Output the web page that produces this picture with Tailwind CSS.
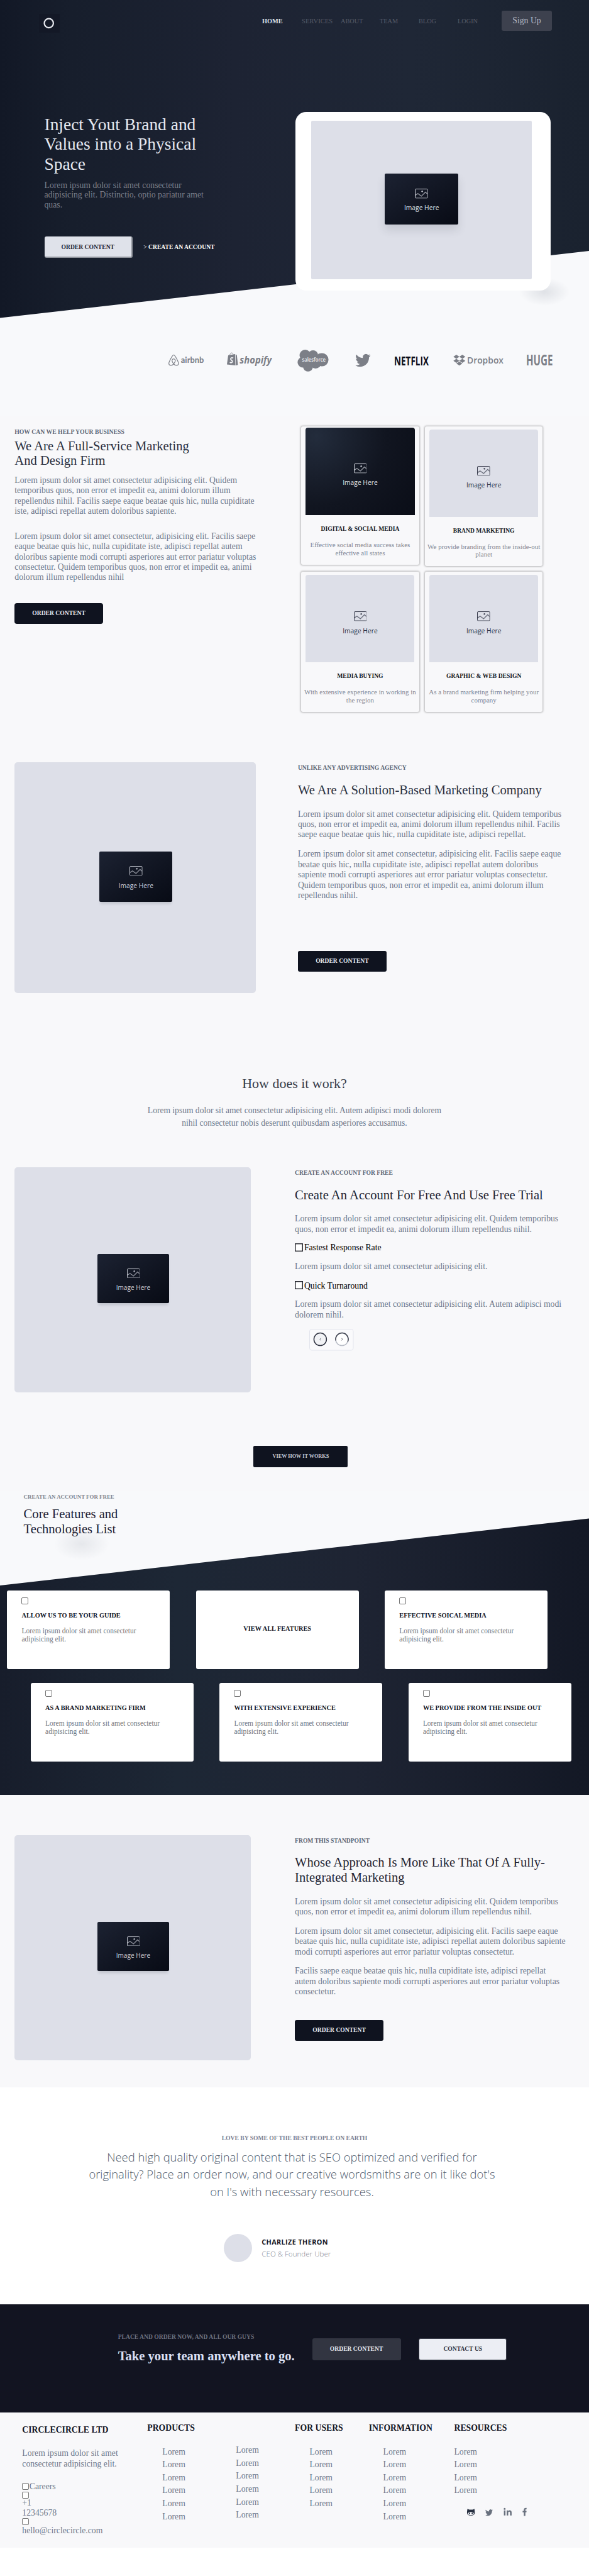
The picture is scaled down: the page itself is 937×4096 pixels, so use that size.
<!DOCTYPE html>
<html lang="en">
<head>
<meta charset="utf-8">
<title>CircleCircle</title>
<script src="https://cdn.jsdelivr.net/npm/@tailwindcss/browser@4"></script>
</head>
<body class="w-[937px] h-[4096px] overflow-hidden bg-white text-[13.73px] leading-[16.45px] text-[#6e788c] font-['Liberation_Serif',serif]">

<svg class="hidden">
  <symbol id="pic" viewBox="0 0 24 18"><rect x=".6" y=".6" width="22.8" height="16.8" rx="1.5" fill="none" stroke="currentColor" stroke-width="1.1"/><path d="M1 12 5.5 9 12 13.7 19.5 6.3 23 9.6" fill="none" stroke="currentColor" stroke-opacity=".65" stroke-width="1.5"/><circle cx="13.5" cy="5" r="1.5" fill="currentColor" fill-opacity=".8"/></symbol>
  <symbol id="bird" viewBox="0 0 24 24" preserveAspectRatio="none"><path fill="currentColor" transform="translate(0 -2.4) scale(1 1.2)" d="M24 4.6a10 10 0 0 1-2.8.8 5 5 0 0 0 2.1-2.7 10 10 0 0 1-3.1 1.2 4.9 4.9 0 0 0-8.4 4.5A14 14 0 0 1 1.6 3.2 4.9 4.9 0 0 0 3.200 9.700a5 5 0 0 1-2.200-.6v.1a4.900 4.900 0 0 0 3.900 4.800 5 5 0 0 1-2.200.1 4.900 4.900 0 0 0 4.600 3.400A9.900 9.900 0 0 1 0 19.540a14 14 0 0 0 7.500 2.200c9.100 0 14-7.500 14-14v-.6A10 10 0 0 0 24 4.600z"/></symbol>
</svg>

<!-- Hero -->
<section class="relative h-[661px] bg-[#f8f9fb] overflow-hidden">
  <svg class="absolute inset-0" width="937" height="661" viewBox="0 0 937 661">
    <defs>
      <linearGradient id="hg" x1="0" x2="1" y1="0" y2="0"><stop offset="0" stop-color="#121826"/><stop offset=".12" stop-color="#171e2c"/><stop offset=".4" stop-color="#1d2333"/><stop offset=".7" stop-color="#1f2736"/><stop offset="1" stop-color="#1a222f"/></linearGradient>
      <radialGradient id="hs"><stop offset="0" stop-color="#9aa0ac" stop-opacity=".26"/><stop offset="1" stop-color="#9aa0ac" stop-opacity="0"/></radialGradient>
    </defs>
    <polygon points="0,0 937,0 937,399 0,505.500" fill="url(#hg)"/>
    <ellipse cx="866" cy="464" rx="40" ry="22" fill="url(#hs)"/>
  </svg>

  <header class="relative flex h-[70px]">
    <div class="ml-[61.500px] mt-[21.500px] w-[33px] h-[30px] bg-[#131826] flex items-center justify-center">
      <svg width="18" height="18" viewBox="0 0 18 18"><circle cx="8.700" cy="8.900" r="7.200" fill="none" stroke="#e6e8ee" stroke-width="2.200"/></svg>
    </div>
    <nav class="flex ml-[322.500px] mt-[26px] h-4 leading-4 text-[10.300px] text-[#565b68] whitespace-nowrap">
      <a class="w-[63px] font-bold text-[#dfe2e9]">HOME</a><a class="w-[62px] text-[10.600px]">SERVICES</a><a class="w-[62px]">ABOUT</a><a class="w-[62px]">TEAM</a><a class="w-[62px]">BLOG</a><a class="w-[70px]">LOGIN</a>
    </nav>
    <a class="mt-[17.300px] w-[80px] h-[31.500px] rounded-[3px] bg-[#3d414e] text-[#b4b8c2] text-center leading-[31px]">Sign Up</a>
  </header>

  <div class="relative flex">
    <div class="ml-[70.500px] w-[399.200px] pt-[112.600px]">
      <h1 class="text-[27.450px] leading-[31.700px] text-[#e6e9f0]">Inject Yout Brand and<br>Values into a Physical<br>Space</h1>
      <p class="mt-[9px] leading-[15.600px] text-[#7b7f8a]">Lorem ipsum dolor sit amet consectetur<br>adipisicing elit. Distinctio, optio pariatur amet<br>quas.</p>
      <div class="mt-[42.500px] flex items-center font-bold text-[9.600px]">
        <a class="w-[140.500px] h-[34px] rounded-[3px] bg-[#dfe2ea] border-r-2 border-b-2 border-[#8f939b] text-[#1f2534] text-center leading-[33px]">ORDER CONTENT</a>
        <a class="ml-[17.300px] text-white whitespace-nowrap"><span class="font-normal">&gt;</span> CREATE AN ACCOUNT</a>
      </div>
    </div>
    <div class="mt-[107.800px] w-[406.300px] h-[284.700px] rounded-[17px] bg-white pl-[25.700px] pt-[14.600px]">
      <div class="w-[350.200px] h-[252px] rounded-[2px] bg-[#dddfe8] pl-[117.100px] pt-[83.800px]">
        <div class="w-[116.500px] h-[80.800px] rounded-[2px] bg-linear-to-br from-[#1c2232] to-[#080b15] shadow-[0_9px_14px_rgba(60,65,80,.14)] flex flex-col items-center text-[#dfe2ea]">
          <svg class="mt-[24px]" width="20.700" height="15.600"><use href="#pic"/></svg>
          <span class="mt-[6.500px] font-['Open_Sans',sans-serif] text-[10.300px]">Image Here</span>
        </div>
      </div>
    </div>
  </div>

  <div class="relative mt-[92.500px] ml-[267px] flex items-center h-[36px]">
    <svg width="670" height="36" viewBox="267 555 670 36" class="text-[#7c7f87]">
      <g fill="none" stroke="currentColor" stroke-width="1.200">
        <path d="M276.300 578.600c-2.300 3.200-7.600 3.400-7.700-.9 0-1.300 5.300-13.400 7.700-13.400s7.700 12.100 7.700 13.400c-.1 4.300-5.400 4.100-7.700.9-1.700-2.300-2.900-4.300-2.600-6 .5-2.700 4.700-2.700 5.200 0 .3 1.700-.9 3.700-2.600 6z"/>
      </g>
      <g fill="currentColor">
        <text x="287.800" y="577.300" textLength="36.600" lengthAdjust="spacingAndGlyphs" font-family="Lato" font-weight="700" font-size="13.500">airbnb</text>
        <path d="M363 565l11-2 .5 18-13.500-1.600z M374.800 563.200l2 1.500 1.700 15.500-3.300.8z"/>
        <path d="M365.500 565c.5-3.500 4-6 5.500-1.500" fill="none" stroke="currentColor" stroke-width=".9"/>
        <path d="M371 569.300c-2.500-1.200-4.300 0-4 1.800.3 1.600 3 2 2.700 4-.3 2-2.700 2-4 .9" fill="none" stroke="#f8f9fb" stroke-width="1.700"/>
        <text x="381.300" y="577.700" textLength="51" lengthAdjust="spacingAndGlyphs" font-family="Open Sans" font-weight="700" font-style="italic" font-size="16.500">shopify</text>
        <circle cx="485.500" cy="565" r="9"/><circle cx="498" cy="565" r="8"/><circle cx="512" cy="572" r="10.600"/><circle cx="482" cy="576" r="8.600"/><circle cx="490" cy="583" r="7.800"/><circle cx="502" cy="577" r="9"/><circle cx="494" cy="572" r="12"/>
        <text x="480.500" y="575" textLength="37.500" lengthAdjust="spacingAndGlyphs" font-family="Open Sans" font-weight="600" font-size="9.300" fill="#f1f2f5">salesforce</text>
        <use href="#bird" x="565.300" y="562.500" width="24.300" height="21"/>
        <text x="627" y="580.500" textLength="55" lengthAdjust="spacingAndGlyphs" font-family="Open Sans" font-weight="700" font-size="19.500" fill="#0a0e1c">NETFLIX</text>
        <path d="M726 564l4.800 3.200-4.800 3.200-4.800-3.200z M735.500 564l4.800 3.200-4.800 3.200-4.800-3.200z M726 570.600l4.800 3.200-4.800 3.200-4.800-3.200z M735.500 570.600l4.800 3.200-4.800 3.200-4.800-3.200z M730.750 575l4.800 3-4.800 3.200-4.800-3.200z"/>
        <text x="743" y="577.800" textLength="58" lengthAdjust="spacingAndGlyphs" font-family="Open Sans" font-weight="600" font-size="15">Dropbox</text>
        <text x="837" y="581.300" textLength="42.500" lengthAdjust="spacingAndGlyphs" font-family="Open Sans" font-weight="700" font-size="22.500">HUGE</text>
      </g>
    </svg>
  </div>
</section>

<!-- Services -->
<section class="flex h-[519px] bg-[#f8f8fa]">
  <div class="ml-[23.300px] w-[455.400px] pt-[18px] whitespace-nowrap">
    <h6 class="text-[9.700px] leading-4 font-bold text-[#5d6675]">HOW CAN WE HELP YOUR BUSINESS</h6>
    <h2 class="mt-[2.600px] text-[20.600px] leading-[23.700px] text-[#2b3040]">We Are A Full-Service Marketing<br>And Design Firm</h2>
    <p class="mt-[11px] leading-[16.300px]">Lorem ipsum dolor sit amet consectetur adipisicing elit. Quidem<br>temporibus quos, non error et impedit ea, animi dolorum illum<br>repellendus nihil. Facilis saepe eaque beatae quis hic, nulla cupiditate<br>iste, adipisci repellat autem doloribus sapiente.</p>
    <p class="mt-[24px] leading-[16.300px]">Lorem ipsum dolor sit amet consectetur, adipisicing elit. Facilis saepe<br>eaque beatae quis hic, nulla cupiditate iste, adipisci repellat autem<br>doloribus sapiente modi corrupti asperiores aut error pariatur voluptas<br>consectetur. Quidem temporibus quos, non error et impedit ea, animi<br>dolorum illum repellendus nihil</p>
    <a class="mt-[32.500px] block w-[140.500px] h-[32.800px] rounded-[4px] bg-[#0f131f] text-[#e4e7ee] text-[9.600px] font-bold text-center leading-[31.500px]">ORDER CONTENT</a>
  </div>
  <div class="grid grid-cols-[188.500px_187.600px] gap-x-[8.700px] content-start pt-[16.500px] text-center text-[10.980px] leading-[12.500px] text-[#7f8695]">
    <article class="h-[220px] rounded-[3px] shadow-[0_0_3px_1px_rgba(0,0,0,.28)] pt-[2.800px]">
      <div class="mx-auto w-[173.300px] h-[139.200px] rounded-t-[4px] bg-[radial-gradient(circle_at_10%_10%,#232c3c,#111520_55%,#0a0d17)] text-[#dfe2ea] flex flex-col items-center">
        <svg class="mt-[57px]" width="20.700" height="15.600"><use href="#pic"/></svg>
        <span class="mt-[8.500px] leading-3 font-['Open_Sans',sans-serif] text-[10.300px]">Image Here</span>
      </div>
      <h3 class="mt-[14px] leading-4 text-[9.600px] font-bold text-[#141824]">DIGITAL &amp; SOCIAL MEDIA</h3>
      <p class="mt-[10.700px]">Effective social media success takes<br>effective all states</p>
    </article>
    <article class="h-[222.700px] rounded-[3px] shadow-[0_0_3px_1px_rgba(0,0,0,.28)] pt-[5.700px]">
      <div class="mx-auto w-[173px] h-[138.800px] rounded-t-[4px] bg-[#dddfe8] text-[#2b3040] flex flex-col items-center">
        <svg class="mt-[58px]" width="20.700" height="15.600"><use href="#pic"/></svg>
        <span class="mt-[8.500px] leading-3 font-['Open_Sans',sans-serif] text-[10.300px]">Image Here</span>
      </div>
      <h3 class="mt-[14px] leading-4 text-[9.600px] font-bold text-[#141824]">BRAND MARKETING</h3>
      <p class="mt-[10.700px] whitespace-nowrap">We provide branding from the inside-out<br>planet</p>
    </article>
    <article class="mt-[9px] h-[222.400px] rounded-[3px] shadow-[0_0_3px_1px_rgba(0,0,0,.28)] pt-[5.300px]">
      <div class="mx-auto w-[173px] h-[139px] rounded-t-[4px] bg-[#dddfe8] text-[#2b3040] flex flex-col items-center">
        <svg class="mt-[58px]" width="20.700" height="15.600"><use href="#pic"/></svg>
        <span class="mt-[8.500px] leading-3 font-['Open_Sans',sans-serif] text-[10.300px]">Image Here</span>
      </div>
      <h3 class="mt-[14px] leading-4 text-[9.600px] font-bold text-[#141824]">MEDIA BUYING</h3>
      <p class="mt-[10.700px] whitespace-nowrap">With extensive experience in working in<br>the region</p>
    </article>
    <article class="mt-[9px] h-[222.400px] rounded-[3px] shadow-[0_0_3px_1px_rgba(0,0,0,.28)] pt-[5.300px]">
      <div class="mx-auto w-[173px] h-[139px] rounded-t-[4px] bg-[#dddfe8] text-[#2b3040] flex flex-col items-center">
        <svg class="mt-[58px]" width="20.700" height="15.600"><use href="#pic"/></svg>
        <span class="mt-[8.500px] leading-3 font-['Open_Sans',sans-serif] text-[10.300px]">Image Here</span>
      </div>
      <h3 class="mt-[14px] leading-4 text-[9.600px] font-bold text-[#141824]">GRAPHIC &amp; WEB DESIGN</h3>
      <p class="mt-[10.700px] whitespace-nowrap">As a brand marketing firm helping your<br>company</p>
    </article>
  </div>
</section>

<!-- Solution -->
<section class="flex h-[480px] bg-[#f8f8fa]">
  <div class="ml-[23.300px] mt-[32.400px] w-[384.200px] h-[366.400px] rounded-[5px] bg-[#dddfe8] pl-[135px] pt-[141.600px]">
    <div class="w-[116px] h-[79.800px] rounded-[2px] bg-linear-to-br from-[#1c2232] to-[#080b15] shadow-[0_5px_4px_-2px_rgba(60,65,80,.18)] flex flex-col items-center text-[#cdd0d9]">
      <svg class="mt-[23px]" width="20.700" height="15.600"><use href="#pic"/></svg>
      <span class="mt-[7px] font-['Open_Sans',sans-serif] text-[10.300px]">Image Here</span>
    </div>
  </div>
  <div class="ml-[66.400px] pt-[33px] whitespace-nowrap">
    <h6 class="text-[9.600px] leading-4 font-bold text-[#5d6675]">UNLIKE ANY ADVERTISING AGENCY</h6>
    <h2 class="mt-[15.400px] text-[20.600px] leading-6 text-[#2b3040]">We Are A Solution-Based Marketing Company</h2>
    <p class="mt-[18.200px]">Lorem ipsum dolor sit amet consectetur adipisicing elit. Quidem temporibus<br>quos, non error et impedit ea, animi dolorum illum repellendus nihil. Facilis<br>saepe eaque beatae quis hic, nulla cupiditate iste, adipisci repellat.</p>
    <p class="mt-[14.500px]">Lorem ipsum dolor sit amet consectetur, adipisicing elit. Facilis saepe eaque<br>beatae quis hic, nulla cupiditate iste, adipisci repellat autem doloribus<br>sapiente modi corrupti asperiores aut error pariatur voluptas consectetur.<br>Quidem temporibus quos, non error et impedit ea, animi dolorum illum<br>repellendus nihil.</p>
    <a class="mt-[79.300px] block w-[141px] h-[32.500px] rounded-[3px] bg-[#0f131f] text-[#e4e7ee] text-[9.600px] font-bold text-center leading-[31.500px]">ORDER CONTENT</a>
  </div>
</section>

<!-- How it works -->
<section class="h-[710.600px] bg-[#f8f8fa] pt-[51px]">
  <h2 class="text-center text-[21.960px] leading-6 text-[#363c4a]">How does it work?</h2>
  <p class="mt-[21.300px] text-center text-[13.560px] leading-[19.200px]">Lorem ipsum dolor sit amet consectetur adipisicing elit. Autem adipisci modi dolorem<br>nihil consectetur nobis deserunt quibusdam asperiores accusamus.</p>
  <div class="mt-[61.200px] flex">
    <div class="ml-[23.300px] w-[375.300px] h-[357.900px] rounded-[5px] bg-[#dddfe8] pl-[131.500px] pt-[138.300px]">
      <div class="w-[114.200px] h-[78px] rounded-[2px] bg-linear-to-br from-[#1c2232] to-[#080b15] shadow-[0_5px_4px_-2px_rgba(60,65,80,.18)] flex flex-col items-center text-[#cdd0d9]">
        <svg class="mt-[22.500px]" width="20.700" height="15.600"><use href="#pic"/></svg>
        <span class="mt-[6.500px] font-['Open_Sans',sans-serif] text-[10.100px]">Image Here</span>
      </div>
    </div>
    <div class="ml-[70.500px] whitespace-nowrap">
      <h6 class="mt-[.7px] text-[9.600px] leading-4 font-bold text-[#5d6675]">CREATE AN ACCOUNT FOR FREE</h6>
      <h2 class="mt-[15.400px] text-[20.600px] leading-6 text-[#1f2432]">Create An Account For Free And Use Free Trial</h2>
      <p class="mt-[18.300px]">Lorem ipsum dolor sit amet consectetur adipisicing elit. Quidem temporibus<br>quos, non error et impedit ea, animi dolorum illum repellendus nihil.</p>
      <div class="mt-[13px] flex items-center text-black"><svg class="mb-[2px] -ml-[.5px] mr-[2.300px]" width="13" height="13"><rect x=".7" y=".7" width="11.600" height="11.600" fill="#fff" stroke="#23252c" stroke-width="1.400"/></svg>Fastest Response Rate</div>
      <p class="mt-[13.800px]">Lorem ipsum dolor sit amet consectetur adipisicing elit.</p>
      <div class="mt-[13.800px] flex items-center text-black"><svg class="mb-[2px] -ml-[.5px] mr-[2.300px]" width="13" height="13"><rect x=".7" y=".7" width="11.600" height="11.600" fill="#fff" stroke="#23252c" stroke-width="1.400"/></svg>Quick Turnaround</div>
      <p class="mt-[13.200px]">Lorem ipsum dolor sit amet consectetur adipisicing elit. Autem adipisci modi<br>dolorem nihil.</p>
      <svg class="mt-[14.200px] ml-[23.300px]" width="71" height="35" viewBox="0 0 71 35">
        <rect x=".5" y=".5" width="69.500" height="33.500" rx="3.500" fill="#fafafc" stroke="#e3e5ed"/>
        <circle cx="17.400" cy="16.600" r="10" fill="#f1f2f5" stroke="#2e3240" stroke-width="1.500"/>
        <path d="M18.200 14.800l-1.300 1.800 1.300 1.800" fill="none" stroke="#6d717c"/>
        <circle cx="52" cy="16.600" r="10" fill="#fff" stroke="#b9bdc7" stroke-width="1.500"/>
        <path d="M42.200 18.500A10 10 0 1 1 61.200 20.500" fill="none" stroke="#3b3f4c" stroke-width="1.500"/>
        <path d="M51.500 14.800l1.300 1.800-1.300 1.800" fill="none" stroke="#555965"/>
      </svg>
    </div>
  </div>
  <a class="mt-[84.800px] ml-[403.400px] block w-[150px] h-[34.400px] rounded-[2px] bg-[#0f131f] text-[#c3c8d6] text-[8.240px] font-bold text-center leading-[33.500px]">VIEW HOW IT WORKS</a>
</section>

<!-- Core features -->
<section class="relative h-[483.600px] overflow-hidden bg-[#f8f9fb]">
  <svg class="absolute inset-0" width="937" height="484" viewBox="0 0 937 484">
    <defs><linearGradient id="fg" x1="0" x2="1" y1="0" y2="0"><stop offset="0" stop-color="#171d2b"/><stop offset=".3" stop-color="#1d2735"/><stop offset=".6" stop-color="#1e2433"/><stop offset="1" stop-color="#131825"/></linearGradient></defs>
    <ellipse cx="130" cy="84" rx="44" ry="26" fill="url(#hs)" opacity=".75"/>
    <polygon points="0,150 937,43.500 937,484 0,484" fill="url(#fg)"/>
  </svg>
  <div class="relative ml-[37.600px] pt-[1.300px]">
    <h6 class="text-[8.900px] leading-4 font-bold text-[#7d858f]">CREATE AN ACCOUNT FOR FREE</h6>
    <h2 class="mt-[7.300px] text-[20.600px] leading-[24.100px] text-[#1d2233]">Core Features and<br>Technologies List</h2>
  </div>
  <div class="relative mt-[85.700px] ml-[11.400px] flex gap-[41.500px] text-[11.440px] leading-[13px] text-[#6f7680]">
    <article class="w-[258.900px] h-[125.200px] rounded-[3px] bg-white pl-[23.100px] pt-[10.600px]">
      <span class="block w-[11px] h-[11px] rounded-[2px] border border-[#767676]"></span>
      <h3 class="mt-[10.200px] leading-4 text-[10.300px] font-bold text-[#11141f]">ALLOW US TO BE YOUR GUIDE</h3>
      <p class="mt-[9.800px]">Lorem ipsum dolor sit amet consectetur<br>adipisicing elit.</p>
    </article>
    <article class="w-[258.900px] h-[125.200px] rounded-[3px] bg-white pt-[53.200px] text-center">
      <h3 class="leading-4 text-[10.300px] font-bold text-[#11141f]">VIEW ALL FEATURES</h3>
    </article>
    <article class="w-[258.900px] h-[125.200px] rounded-[3px] bg-white pl-[23.100px] pt-[10.600px]">
      <span class="block w-[11px] h-[11px] rounded-[2px] border border-[#767676]"></span>
      <h3 class="mt-[10.200px] leading-4 text-[10.300px] font-bold text-[#11141f]">EFFECTIVE SOICAL MEDIA</h3>
      <p class="mt-[9.800px]">Lorem ipsum dolor sit amet consectetur<br>adipisicing elit.</p>
    </article>
  </div>
  <div class="relative mt-[21.500px] ml-[49px] flex gap-[41.500px] text-[11.440px] leading-[13px] text-[#6f7680]">
    <article class="w-[258.900px] h-[125.200px] rounded-[3px] bg-white pl-[23.100px] pt-[11.300px]">
      <span class="block w-[11px] h-[11px] rounded-[2px] border border-[#767676]"></span>
      <h3 class="mt-[10.200px] leading-4 text-[10.300px] font-bold text-[#11141f]">AS A BRAND MARKETING FIRM</h3>
      <p class="mt-[9.800px]">Lorem ipsum dolor sit amet consectetur<br>adipisicing elit.</p>
    </article>
    <article class="w-[258.900px] h-[125.200px] rounded-[3px] bg-white pl-[23.100px] pt-[11.300px]">
      <span class="block w-[11px] h-[11px] rounded-[2px] border border-[#767676]"></span>
      <h3 class="mt-[10.200px] leading-4 text-[10.300px] font-bold text-[#11141f]">WITH EXTENSIVE EXPERIENCE</h3>
      <p class="mt-[9.800px]">Lorem ipsum dolor sit amet consectetur<br>adipisicing elit.</p>
    </article>
    <article class="w-[258.900px] h-[125.200px] rounded-[3px] bg-white pl-[23.100px] pt-[11.300px]">
      <span class="block w-[11px] h-[11px] rounded-[2px] border border-[#767676]"></span>
      <h3 class="mt-[10.200px] leading-4 text-[10.300px] font-bold text-[#11141f]">WE PROVIDE FROM THE INSIDE OUT</h3>
      <p class="mt-[9.800px]">Lorem ipsum dolor sit amet consectetur<br>adipisicing elit.</p>
    </article>
  </div>
</section>

<!-- Standpoint -->
<section class="flex h-[464.600px] bg-[#f8f8fa]">
  <div class="ml-[23.300px] mt-[63.800px] w-[375.300px] h-[357.800px] rounded-[5px] bg-[#dddfe8] pl-[131.500px] pt-[138.200px]">
    <div class="w-[114.200px] h-[78px] rounded-[2px] bg-linear-to-br from-[#1c2232] to-[#080b15] shadow-[0_5px_4px_-2px_rgba(60,65,80,.18)] flex flex-col items-center text-[#cdd0d9]">
      <svg class="mt-[22.500px]" width="20.700" height="15.600"><use href="#pic"/></svg>
      <span class="mt-[6.500px] font-['Open_Sans',sans-serif] text-[10.100px]">Image Here</span>
    </div>
  </div>
  <div class="ml-[70.500px] pt-[64.400px] whitespace-nowrap">
    <h6 class="text-[9.600px] leading-4 font-bold text-[#5d6675]">FROM THIS STANDPOINT</h6>
    <h2 class="mt-[15.600px] text-[20.600px] leading-[23.700px] text-[#1f2432]">Whose Approach Is More Like That Of A Fully-<br>Integrated Marketing</h2>
    <p class="mt-[18.100px]">Lorem ipsum dolor sit amet consectetur adipisicing elit. Quidem temporibus<br>quos, non error et impedit ea, animi dolorum illum repellendus nihil.</p>
    <p class="mt-[14.200px]">Lorem ipsum dolor sit amet consectetur, adipisicing elit. Facilis saepe eaque<br>beatae quis hic, nulla cupiditate iste, adipisci repellat autem doloribus sapiente<br>modi corrupti asperiores aut error pariatur voluptas consectetur.</p>
    <p class="mt-[14.200px]">Facilis saepe eaque beatae quis hic, nulla cupiditate iste, adipisci repellat<br>autem doloribus sapiente modi corrupti asperiores aut error pariatur voluptas<br>consectetur.</p>
    <a class="mt-[36.700px] block w-[141px] h-[32.600px] rounded-[3px] bg-[#0f131f] text-[#e4e7ee] text-[9.600px] font-bold text-center leading-[32px]">ORDER CONTENT</a>
  </div>
</section>

<!-- Testimonial -->
<section class="h-[345.700px] bg-white pt-[72.900px] text-center">
  <h6 class="text-[9.600px] leading-4 font-bold text-[#7b8294]">LOVE BY SOME OF THE BEST PEOPLE ON EARTH</h6>
  <blockquote class="mt-[8.600px] mr-[8px] font-['Open_Sans',sans-serif] font-light text-[18.400px] leading-[27.200px] text-[#4d596b] whitespace-nowrap">Need high quality original content that is SEO optimized and verified for<br>originality? Place an order now, and our creative wordsmiths are on it like dot's<br>on I's with necessary resources.</blockquote>
  <div class="mt-[54.400px] ml-[355.600px] flex text-left font-['Open_Sans',sans-serif]">
    <div class="size-[45px] rounded-full bg-[#dddfe8]"></div>
    <div class="ml-[15.700px] pt-[5px]">
      <div class="text-[10.800px] leading-4 font-bold tracking-[.4px] text-[#11141f]">CHARLIZE THERON</div>
      <div class="mt-[3px] text-[11.600px] leading-4 font-light text-[#808593]">CEO &amp; Founder Uber</div>
    </div>
  </div>
</section>

<!-- Call to action -->
<section class="flex h-[171.700px] bg-[#121421] font-bold">
  <div class="ml-[187.700px] w-[308.900px] pt-[43.700px] whitespace-nowrap">
    <h6 class="text-[9.600px] leading-4 text-[#6e7280]">PLACE AND ORDER NOW, AND ALL OUR GUYS</h6>
    <h2 class="mt-[10px] text-[20.600px] leading-6 text-[#dbe0f5]">Take your team anywhere to go.</h2>
  </div>
  <a class="mt-[54px] w-[141px] h-[34.500px] rounded-[3px] bg-[#323541] text-[#e4e7ee] text-[9.600px] text-center leading-[33px]">ORDER CONTENT</a>
  <a class="mt-[54px] ml-[28.700px] w-[140px] h-[34.500px] rounded-[3px] bg-[#eceef4] border border-[#3b3e4b] text-[#2f3443] text-[9.600px] text-center leading-[31px]">CONTACT US</a>
</section>

<!-- Footer -->
<footer class="flex h-[214.500px] bg-[#f8f8fa] whitespace-nowrap">
  <div class="ml-[35.300px] w-[199px] pt-[19.700px]">
    <h4 class="font-bold text-[#11141f]">CIRCLECIRCLE LTD</h4>
    <p class="mt-[21.100px]">Lorem ipsum dolor sit amet<br>consectetur adipisicing elit.</p>
    <div class="mt-[20.200px] flex items-center"><span class="mb-[3px] mr-[.5px] w-[11px] h-[11px] rounded-[2px] border border-[#767676] bg-white"></span>Careers</div>
    <span class="mt-[-1.300px] block w-[11px] h-[11px] rounded-[2px] border border-[#767676] bg-white"></span>
    <p class="mt-[-.6px] leading-[15.500px]">+1<br>12345678</p>
    <span class="mt-[1.300px] block w-[11px] h-[11px] rounded-[2px] border border-[#767676] bg-white"></span>
    <p class="mt-[.4px]">hello@circlecircle.com</p>
  </div>
  <div class="w-[141px] pt-[17.300px]">
    <h4 class="font-bold text-[#11141f]">PRODUCTS</h4>
    <ul class="mt-[18.700px] ml-[24px] leading-[20.600px]"><li>Lorem</li><li>Lorem</li><li>Lorem</li><li>Lorem</li><li>Lorem</li><li>Lorem</li></ul>
  </div>
  <ul class="w-[93.800px] pt-[50px] leading-[20.600px]"><li>Lorem</li><li>Lorem</li><li>Lorem</li><li>Lorem</li><li>Lorem</li><li>Lorem</li></ul>
  <div class="w-[117.700px] pt-[17.300px]">
    <h4 class="font-bold text-[#11141f]">FOR USERS</h4>
    <ul class="mt-[18.700px] ml-[23.300px] leading-[20.600px]"><li>Lorem</li><li>Lorem</li><li>Lorem</li><li>Lorem</li><li>Lorem</li></ul>
  </div>
  <div class="w-[135.700px] pt-[17.300px]">
    <h4 class="font-bold text-[#11141f]">INFORMATION</h4>
    <ul class="mt-[18.700px] ml-[22.800px] leading-[20.600px]"><li>Lorem</li><li>Lorem</li><li>Lorem</li><li>Lorem</li><li>Lorem</li><li>Lorem</li></ul>
  </div>
  <div class="pt-[17.300px]">
    <h4 class="font-bold text-[#11141f]">RESOURCES</h4>
    <ul class="mt-[18.700px] leading-[20.600px]"><li>Lorem</li><li>Lorem</li><li>Lorem</li><li>Lorem</li></ul>
    <svg class="mt-[16px] ml-[20px]" width="100" height="16" viewBox="742 3987 100 16">
      <path fill="#273041" d="M743.600 3989.200l3 1.300h5.200l3-1.300.3 3.500c.6 3.300.2 7.300-6 7.300s-6.500-4-6-7.300z"/>
      <ellipse cx="749.100" cy="3996.700" rx="4.600" ry="2.500" fill="#f8f8fa"/><ellipse cx="747" cy="3996.500" rx=".9" ry="1.500" fill="#273041"/><ellipse cx="751.200" cy="3996.500" rx=".9" ry="1.500" fill="#273041"/>
      <g class="text-[#69717e]"><use href="#bird" x="772" y="3990" width="12" height="10.600"/></g>
      <g fill="#69717e"><circle cx="802.800" cy="3989.300" r="1.500"/><rect x="801.600" y="3991.700" width="2.500" height="8"/><path d="M806 3991.700h2.400v1.100c1.700-2.200 5.500-1.500 5.500 2v4.900h-2.500v-4.300c0-2.400-2.900-2.200-2.900 0v4.300H806z"/>
      <path d="M833.300 4000.600v-5.900h-1.900v-2.300h1.900v-1.800c0-2.300 1.700-3.300 4.400-2.800v2.100c-1.400-.1-1.900.1-1.900 1v1.500h1.900l-.3 2.300h-1.600v5.900z"/></g>
    </svg>
  </div>
</footer>
</body>
</html>
